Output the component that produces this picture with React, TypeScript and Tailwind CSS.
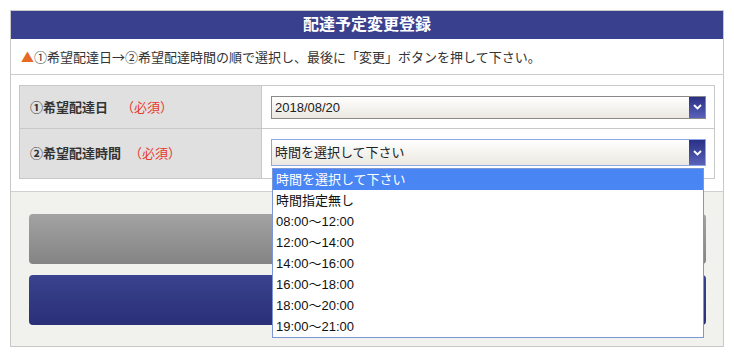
import React from "react";

const FONT = {
  fontFamily: '"Liberation Sans", "Noto Sans CJK JP", sans-serif',
};
const CJK = {
  fontFamily: '"Noto Sans CJK JP", "Liberation Sans", sans-serif',
};

function Arrow() {
  return (
    <div className="flex w-[16px] shrink-0 items-center justify-center bg-gradient-to-b from-[#2a3085] to-[#5a62b9]">
      <svg width="9" height="6" viewBox="0 0 9 6">
        <path d="M1 1 L4.5 4.5 L8 1" stroke="#fff" strokeWidth="1.8" fill="none" />
      </svg>
    </div>
  );
}

const options = [
  "時間を選択して下さい",
  "時間指定無し",
  "08:00～12:00",
  "12:00～14:00",
  "14:00～16:00",
  "16:00～18:00",
  "18:00～20:00",
  "19:00～21:00",
];

export default function App() {
  return (
    <div className="relative h-[357px] w-[734px] overflow-hidden bg-white pl-[10px] pt-[10px] text-[#222]" style={FONT}>
      <div className="w-[714px] border border-[#c8c8c8]">
        <div className="flex h-[28px] items-center justify-center bg-[#39418f] text-[16px] font-bold leading-none text-white">
          配達予定変更登録
        </div>
        <div className="flex h-[36px] items-center border-b border-[#cccccc] pl-[10px] text-[13px] leading-none text-[#333]" style={CJK}>
          <span className="text-[#e46a26]">▲</span>
          <span>①希望配達日→②希望配達時間の順で選択し、最後に「変更」ボタンを押して下さい。</span>
        </div>
        <div className="px-[8px] pb-[12px] pt-[10px]">
          <div className="border border-[#c8c8c8] text-[13px] leading-none">
            <div className="flex h-[43px] border-b border-[#c8c8c8]">
              <div className="flex w-[242px] shrink-0 items-center border-r border-[#c8c8c8] bg-[#e0e0e0] pl-[10px]">
                <span className="font-bold text-[#333]">①希望配達日</span>
                <span className="ml-[13px] text-[#e8392e]">（必須）</span>
              </div>
              <div className="flex flex-1 items-center pl-[9px] pr-[8px]">
                <div className="flex h-[23px] w-full border border-[#8a8a8a] bg-gradient-to-b from-white to-[#ebe8e0]">
                  <div className="flex flex-1 items-center pl-[3px]">2018/08/20</div>
                  <Arrow />
                </div>
              </div>
            </div>
            <div className="flex h-[49px]">
              <div className="flex w-[242px] shrink-0 items-center border-r border-[#c8c8c8] bg-[#e0e0e0] pl-[10px]">
                <span className="font-bold text-[#333]">②希望配達時間</span>
                <span className="ml-[8px] text-[#e8392e]">（必須）</span>
              </div>
              <div className="flex flex-1 items-start pl-[9px] pr-[8px] pt-[10px]">
                <div className="flex h-[27px] w-full border border-[#8fa6e6] bg-gradient-to-b from-white to-[#ebe8e0]">
                  <div className="flex flex-1 items-center pl-[3px]">時間を選択して下さい</div>
                  <Arrow />
                </div>
              </div>
            </div>
          </div>
        </div>
        <div className="flex flex-col gap-[11px] border-t border-[#d0d0d0] bg-[#f1f1ed] pb-[21px] pl-[18px] pr-[17px] pt-[22px]">
          <div className="h-[50px] rounded-[4px] bg-gradient-to-b from-[#a3a3a3] to-[#848484]" />
          <div className="h-[50px] rounded-[4px] bg-gradient-to-b from-[#3a438f] to-[#2a2f77]" />
        </div>
      </div>

      <div className="absolute left-[272px] top-[168px] w-[432px] border border-[#7d97d6] bg-white text-[13px] leading-none">
        {options.map((o, i) => (
          <div
            key={o}
            className={
              i === 0
                ? "flex h-[21px] items-center bg-[#4a86f3] pl-[3px] text-white"
                : "flex h-[21px] items-center pl-[3px] text-[#111]"
            }
          >
            {o}
          </div>
        ))}
      </div>
    </div>
  );
}
